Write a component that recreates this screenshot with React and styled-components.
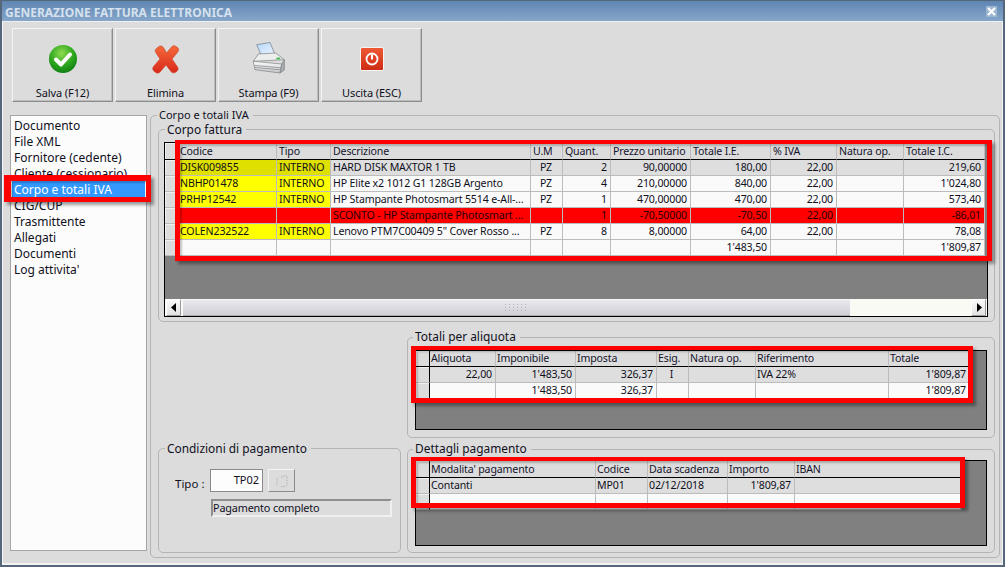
import React from "react";
import styled, { createGlobalStyle } from "styled-components";

const Global = createGlobalStyle`
  html, body { margin: 0; padding: 0; background: #dcdcdc; }
  body { font-family: "Noto Sans", "DejaVu Sans", sans-serif; font-size: 10.6px; letter-spacing: -.15px; color: #10101c; }
`;

const Window = styled.div`
  box-sizing: border-box; width: 1005px; height: 567px; overflow: hidden;
  display: flex; flex-direction: column; background: #dcdcdc;
  border: 2px solid #55677b; border-top-width: 1px;
`;
const TitleBar = styled.div`
  height: 20px; flex: none; display: flex; align-items: center; justify-content: space-between;
  padding: 0 6px 0 3px; border-bottom: 1px solid #eef1f4;
  background: linear-gradient(#5f86b3, #86a6c9);
`;
const TitleText = styled.span`
  font: bold 12px "Noto Sans", sans-serif; letter-spacing: 0; color: #d5e1ee; white-space: nowrap; padding-top: 3px;
`;
const CloseBox = styled.div`
  width: 11px; height: 11px; display: flex; align-items: center; justify-content: center;
  background: #9db6d2;
`;
const Content = styled.div`
  flex: 1; display: flex; flex-direction: column; min-height: 0;
  box-shadow: inset 1px 0 #f3f3f3, inset -1px 0 #f3f3f3, inset 0 -2px #f3f3f3;
`;
const Toolbar = styled.div`
  display: flex; gap: 2px; padding: 6px 0 0 10px; flex: none;
`;
const ToolButton = styled.button`
  box-sizing: border-box; width: 101px; height: 74px; padding: 0; margin: 0;
  display: flex; flex-direction: column; align-items: center;
  background: #dcdcdc; color: #10101c; font: 11px "Noto Sans", sans-serif; letter-spacing: -.1px;
  border: 1px solid; border-color: #f4f4f4 #8c8c8c #8c8c8c #f4f4f4;
  box-shadow: inset -1px -1px #bdbdbd;
`;
const ToolIcon = styled.div`
  height: 36px; margin-top: 12px; display: flex; align-items: center; justify-content: center;
`;
const ToolLabel = styled.span`
  margin-top: 9px; line-height: 16px;
`;
const Body = styled.div`
  display: flex; gap: 3px; padding: 13px 0 0 8px; flex: none;
`;
const SideList = styled.ul`
  box-sizing: border-box; position: relative; z-index: 2; width: 137px; height: 436px; margin: 0;
  padding: 1px 1px 0; list-style: none; background: #fcfcfc; border: 1px solid #a6a6a6;
  font-size: 12px; letter-spacing: 0;
`;
const SideItem = styled.li`
  height: 16px; line-height: 18px; padding-left: 2px; white-space: nowrap;
  background: ${p => (p.$active ? "#3399ff" : "transparent")};
  color: ${p => (p.$active ? "#fff" : "#10101c")};
`;
const Group = styled.section`
  box-sizing: border-box; position: relative; flex: none;
  width: ${p => p.$w}px; height: ${p => p.$h}px;
  padding: ${p => p.$pad};
  border: 1px solid #b4b4b4; border-radius: 5px;
`;
const Legend = styled.span`
  position: absolute; left: ${p => p.$x ?? 6}px; top: ${p => p.$top ?? -8}px; padding: 0 4px 0 2px;
  background: #dcdcdc; line-height: 14px; white-space: nowrap;
  font-size: ${p => p.$size ?? 11.9}px; letter-spacing: 0;
`;
const Lower = styled.div`
  display: flex; gap: 6px; margin-top: 15px;
`;
const Column = styled.div`
  display: flex; flex-direction: column; justify-content: flex-end; gap: ${p => p.$gap ?? 0}px;
`;
const DataGrid = styled.div`
  box-sizing: border-box; position: relative; display: flex; flex-direction: column;
  width: ${p => p.$w}px; height: ${p => p.$h}px;
  background: #808080; border: 1px solid #000;
`;
const Rows = styled.div`
  flex: 1; min-height: 0;
`;
const Row = styled.div`
  display: grid; grid-template-columns: ${p => p.$cols};
  height: ${p => p.$h ?? 16}px; width: max-content;
`;
const Cell = styled.div`
  box-sizing: border-box; overflow: hidden; white-space: nowrap; line-height: 15px;
  padding: 0 3px 0 ${p => p.$pl}px; text-align: ${p => p.$align ?? "left"};
  border-right: 1px solid #bcbcbc; border-bottom: 1px solid #bcbcbc;
  background: ${p => p.$bg};
  color: ${p => p.$fg ?? "#10101c"};
`;
const HeadCell = styled.div`
  box-sizing: border-box; overflow: hidden; white-space: nowrap; line-height: ${p => p.$lh}px;
  padding: 0 2px 0 ${p => p.$pl}px; background: #dcdcdc; color: #14142c;
  border-right: 1px solid #bcbcbc; border-bottom: 1px solid #000;
`;
const Indicator = styled.div`
  background: #dcdcdc; border-right: 1px solid #000;
  border-bottom: 1px solid ${p => (p.$head ? "#000" : "#bcbcbc")};
  box-shadow: inset 1px 1px #f0f0f0;
`;
const Scrollbar = styled.div`
  display: flex; align-items: stretch; height: 17px; padding-left: 1px; padding-right: 1px; flex: none;
  background: #fafaf5;
`;
const ScrollButton = styled.div`
  width: 15px; flex: none; display: flex; align-items: center; justify-content: center;
  background: linear-gradient(#fafafa, #e2e2e2); border: 1px solid; box-sizing: border-box;
  border-color: #fff #9a9a9a #9a9a9a #fff;
`;
const ScrollThumb = styled.div`
  width: 667px; margin-left: 2px; flex: none; display: flex; align-items: center; justify-content: center;
  background: linear-gradient(#e9e9ee, #cfcfd6); border-top: 1px solid #f4f4f4; border-bottom: 1px solid #a8a8ae;
  box-sizing: border-box;
`;
const ScrollTrack = styled.div`
  flex: 1;
`;
const RedFrame = styled.div`
  position: absolute; pointer-events: none; box-sizing: border-box;
  left: ${p => p.$x}px; top: ${p => p.$y}px; width: ${p => p.$w}px; height: ${p => p.$h}px;
  border: solid #ff0000; border-width: ${p => p.$b ?? "4px 5px 5px 5px"};
  box-shadow: 3px 3px 3px rgba(0,0,0,.38), inset 2px 2px 2px rgba(0,0,0,.22);
`;
const TipoRow = styled.div`
  display: flex; align-items: center; margin: 20px 0 0 16px;
`;
const TipoLabel = styled.label`
  width: 35px; font-size: 11.5px; letter-spacing: 0; margin-top: 6px;
`;
const TipoInput = styled.div`
  box-sizing: border-box; width: 53px; height: 23px; padding: 0 3px; text-align: right; line-height: 19px;
  background: #fdfdfd; border: 1px solid #8a8a8a; font-size: 11px; letter-spacing: 0;
`;
const LookupButton = styled.div`
  box-sizing: border-box; width: 27px; height: 23px; margin-left: 5px;
  display: flex; align-items: center; justify-content: center;
  background: #dcdcdc; border: 1px solid; border-color: #f4f4f4 #8c8c8c #8c8c8c #f4f4f4;
`;
const ReadOnly = styled.div`
  box-sizing: border-box; width: 181px; height: 18px; margin: 7px 0 0 52px; padding-left: 0;
  line-height: 14px; border: 2px solid; border-color: #8e8e8e #f0f0f0 #f0f0f0 #8e8e8e; font-size: 10.8px;
`;

const CheckIcon = () => (
  <svg width="30" height="30" viewBox="0 0 30 30">
    <defs>
      <radialGradient id="gc" cx="45%" cy="30%" r="75%">
        <stop offset="0" stopColor="#8fdc50" />
        <stop offset=".55" stopColor="#2fa81e" />
        <stop offset="1" stopColor="#0b7a12" />
      </radialGradient>
    </defs>
    <circle cx="15" cy="15" r="14" fill="url(#gc)" />
    <path d="M8 15.5l5 5 9-10" fill="none" stroke="#fff" strokeWidth="4" strokeLinecap="round" strokeLinejoin="round" />
  </svg>
);
const CrossIcon = () => (
  <svg width="30" height="30" viewBox="0 0 30 30">
    <defs>
      <linearGradient id="gx" x1="0" y1="0" x2="0" y2="1">
        <stop offset="0" stopColor="#f46a3a" />
        <stop offset="1" stopColor="#d9281a" />
      </linearGradient>
    </defs>
    <path d="M8 2.500c2-1.500 4 0 5 2l2.500 4.500 5-6c1.500-1.800 3.500-1.500 6 .5 1.500 1.300 1.300 3 .2 4.500L21 15l5.500 8c1.300 2 .5 3.500-1.500 5-2 1.300-3.800 1-5-.5L15 21l-6 7c-1.500 1.500-3 1.500-5 0-2.500-1.800-2.800-3.500-1.500-5.500L9 15 4.500 8C3.500 6 5 4.500 8 2.500z" fill="url(#gx)" stroke="#c9371f" strokeWidth=".6" />
  </svg>
);
const PrinterIcon = () => (
  <svg width="34" height="34" viewBox="0 0 34 34">
    <defs>
      <linearGradient id="gp" x1="0" y1="0" x2="0" y2="1">
        <stop offset="0" stopColor="#fdfdfd" />
        <stop offset="1" stopColor="#c4c6c8" />
      </linearGradient>
      <linearGradient id="gq" x1="0" y1="0" x2="1" y2="1">
        <stop offset="0" stopColor="#b6d6f8" />
        <stop offset="1" stopColor="#eef6fe" />
      </linearGradient>
    </defs>
    <path d="M4.700 2.700L18 .5l5 12.200-13.300 1.600z" fill="url(#gq)" stroke="#6f7b86" strokeWidth=".7" />
    <path d="M6.300 12l17.400-1 8.600 6.700-31 1.600z" fill="#eceded" stroke="#7b7f84" strokeWidth=".7" />
    <path d="M1.300 19.300l28.400 2.700L28 31 3 27.700z" fill="url(#gp)" stroke="#7b7f84" strokeWidth=".7" />
    <path d="M29.700 22l2.600-4.300V28L28 31z" fill="#a9acaf" stroke="#7b7f84" strokeWidth=".7" />
    <path d="M3 23.500l25.500 2.300M3 25.500l25 2.300" fill="none" stroke="#8a8e92" strokeWidth=".8" />
    <ellipse cx="26.300" cy="16.500" rx="2.200" ry="1" fill="#3fbf4a" />
  </svg>
);
const PowerIcon = () => (
  <svg width="24" height="24" viewBox="0 0 24 24">
    <defs>
      <linearGradient id="gw" x1="0" y1="0" x2="0" y2="1">
        <stop offset="0" stopColor="#ef5a36" />
        <stop offset="1" stopColor="#cc2a12" />
      </linearGradient>
    </defs>
    <rect x=".5" y=".5" width="23" height="23" rx="1.500" fill="url(#gw)" stroke="#f4f4f4" />
    <circle cx="12" cy="12" r="5.500" fill="none" stroke="#fff" strokeWidth="1.800" />
    <path d="M12 7.500v5" stroke="#fff" strokeWidth="2" />
  </svg>
);
const CloseIcon = () => (
  <svg width="9" height="9" viewBox="0 0 9 9">
    <path d="M1 1l7 7M8 1L1 8" stroke="#fff" strokeWidth="2.200" />
  </svg>
);
const ArrowIcon = ({ right }) => (
  <svg width="6" height="9" viewBox="0 0 6 9">
    <path d={right ? "M1 0l5 4.500L1 9z" : "M5 0L0 4.500 5 9z"} fill="#000" />
  </svg>
);
const GripIcon = () => (
  <svg width="23" height="7" viewBox="0 0 23 7">
    {[0, 1, 2, 3, 4, 5].map(i => [0, 3, 6].map(j => (
      <rect key={`${i}-${j}`} x={i * 4} y={j} width="1" height="1" fill="#b0b0b6" />
    )))}
  </svg>
);
const LookupIcon = () => (
  <svg width="18" height="16" viewBox="0 0 18 16">
    <path d="M4 5v8M8 13.500c2 .5 5 0 6-1.500V3h-4M9 3v3" fill="none" stroke="#b4b4b4" strokeWidth="1" strokeDasharray="1.500 1" />
  </svg>
);

const GREY = "#dedede", WHITE = "#fafafa", YELLOW = "#ffff00", DARKY = "#e0e000", RED = "#ff0000";

const mainCols = "13px 99px 54px 200px 32px 48px 80px 80px 66px 67px 81px";
const mainHead = ["Codice", "Tipo", "Descrizione", "U.M", "Quant.", "Prezzo unitario", "Totale I.E.", "% IVA", "Natura op.", "Totale I.C."];
const mainRows = [
  ["DISK009855", "INTERNO", "HARD DISK MAXTOR  1 TB", "PZ", "2", "90,00000", "180,00", "22,00", "", "219,60"],
  ["NBHP01478", "INTERNO", "HP Elite x2 1012 G1 128GB Argento", "PZ", "4", "210,00000", "840,00", "22,00", "", "1'024,80"],
  ["PRHP12542", "INTERNO", "HP Stampante Photosmart 5514 e-All-...", "PZ", "1", "470,00000", "470,00", "22,00", "", "573,40"],
  ["", "", "SCONTO - HP Stampante Photosmart ...", "", "1", "-70,50000", "-70,50", "22,00", "", "-86,01"],
  ["COLEN232522", "INTERNO", "Lenovo PTM7C00409 5\" Cover Rosso ...", "PZ", "8", "8,00000", "64,00", "22,00", "", "78,08"],
  ["", "", "", "", "", "", "1'483,50", "", "", "1'809,87"],
];
const mainAlign = ["left", "left", "left", "center", "right", "right", "right", "right", "left", "right"];

const taxCols = "14px 66px 80px 81px 32px 67px 133px 81px";
const taxHead = ["Aliquota", "Imponibile", "Imposta", "Esig.", "Natura op.", "Riferimento", "Totale"];
const taxRows = [
  ["22,00", "1'483,50", "326,37", "I", "", "IVA 22%", "1'809,87"],
  ["", "1'483,50", "326,37", "", "", "", "1'809,87"],
];
const taxAlign = ["right", "right", "right", "center", "left", "left", "right"];

const payCols = "14px 166px 52px 80px 67px 166px";
const payHead = ["Modalita' pagamento", "Codice", "Data scadenza", "Importo", "IBAN"];
const payRows = [
  ["Contanti", "MP01", "02/12/2018", "1'809,87", ""],
  ["", "", "", "", ""],
];
const payAlign = ["left", "left", "left", "right", "left"];

const sideItems = ["Documento", "File XML", "Fornitore (cedente)", "Cliente (cessionario)", "Corpo e totali IVA", "CIG/CUP", "Trasmittente", "Allegati", "Documenti", "Log attivita'"];

const GridBody = ({ cols, head, rows, align, headH, tone, pl }) => (
  <Rows>
    <Row $cols={cols} $h={headH}>
      <Indicator $head />
      {head.map(h => <HeadCell key={h} $lh={headH - 1} $pl={pl}>{h}</HeadCell>)}
    </Row>
    {rows.map((r, i) => (
      <Row $cols={cols} key={i}>
        <Indicator />
        {r.map((c, j) => {
          const t = tone(i, j);
          return <Cell key={j} $align={align[j]} $bg={t.bg} $fg={t.fg} $pl={pl}>{c}</Cell>;
        })}
      </Row>
    ))}
  </Rows>
);

const mainTone = (i, j) => {
  if (i === 3) return { bg: RED, fg: "#2a0000" };
  if (j < 2 && i < 5) return { bg: i === 0 ? DARKY : YELLOW };
  return { bg: i === 0 ? GREY : WHITE };
};
const simpleTone = i => ({ bg: i === 0 ? GREY : WHITE });

export default function App() {
  return (
    <Window>
      <Global />
      <TitleBar>
        <TitleText>GENERAZIONE FATTURA ELETTRONICA</TitleText>
        <CloseBox><CloseIcon /></CloseBox>
      </TitleBar>
      <Content>
        <Toolbar>
          <ToolButton><ToolIcon><CheckIcon /></ToolIcon><ToolLabel>Salva (F12)</ToolLabel></ToolButton>
          <ToolButton><ToolIcon><CrossIcon /></ToolIcon><ToolLabel>Elimina</ToolLabel></ToolButton>
          <ToolButton><ToolIcon><PrinterIcon /></ToolIcon><ToolLabel>Stampa (F9)</ToolLabel></ToolButton>
          <ToolButton><ToolIcon><PowerIcon /></ToolIcon><ToolLabel>Uscita (ESC)</ToolLabel></ToolButton>
        </Toolbar>
        <Body>
          <SideList>
            {sideItems.map((s, i) => <SideItem key={s} $active={i === 4}>{s}</SideItem>)}
            <RedFrame $x={-7} $y={59} $w={147} $h={27} $b="6px 5px 5px 7px" />
          </SideList>
          <Group $w={850} $h={443} $pad="13px 0 0 7px">
            <Legend $size={11} $x={6}>Corpo e totali IVA</Legend>
            <Group $w={837} $h={193} $pad="12px 0 0 5px">
              <Legend>Corpo fattura</Legend>
              <DataGrid $w={824} $h={175}>
                <GridBody cols={mainCols} head={mainHead} rows={mainRows} align={mainAlign} headH={17} tone={mainTone} pl={2} />
                <Scrollbar>
                  <ScrollButton><ArrowIcon /></ScrollButton>
                  <ScrollThumb><GripIcon /></ScrollThumb>
                  <ScrollTrack />
                  <ScrollButton><ArrowIcon right /></ScrollButton>
                </Scrollbar>
                <RedFrame $x={10} $y={-3} $w={817} $h={121} />
              </DataGrid>
            </Group>
            <Lower>
              <Column>
                <Group $w={243} $h={105} $pad="0">
                  <Legend>Condizioni di pagamento</Legend>
                  <TipoRow>
                    <TipoLabel>Tipo :</TipoLabel>
                    <TipoInput>TP02</TipoInput>
                    <LookupButton><LookupIcon /></LookupButton>
                  </TipoRow>
                  <ReadOnly>Pagamento completo</ReadOnly>
                </Group>
              </Column>
              <Column $gap={11}>
                <Group $w={588} $h={101} $pad="12px 0 0 7px">
                  <Legend $x={5} $top={-9}>Totali per aliquota</Legend>
                  <DataGrid $w={572} $h={80}>
                    <GridBody cols={taxCols} head={taxHead} rows={taxRows} align={taxAlign} headH={16} tone={simpleTone} pl={1} />
                    <RedFrame $x={-5} $y={-5} $w={562} $h={57} />
                  </DataGrid>
                </Group>
                <Group $w={588} $h={104} $pad="10px 0 0 7px">
                  <Legend $x={5} $top={-9}>Dettagli pagamento</Legend>
                  <DataGrid $w={572} $h={86}>
                    <GridBody cols={payCols} head={payHead} rows={payRows} align={payAlign} headH={17} tone={simpleTone} pl={1} />
                    <RedFrame $x={-5} $y={-4} $w={554} $h={51} />
                  </DataGrid>
                </Group>
              </Column>
            </Lower>
          </Group>
        </Body>
      </Content>
    </Window>
  );
}
